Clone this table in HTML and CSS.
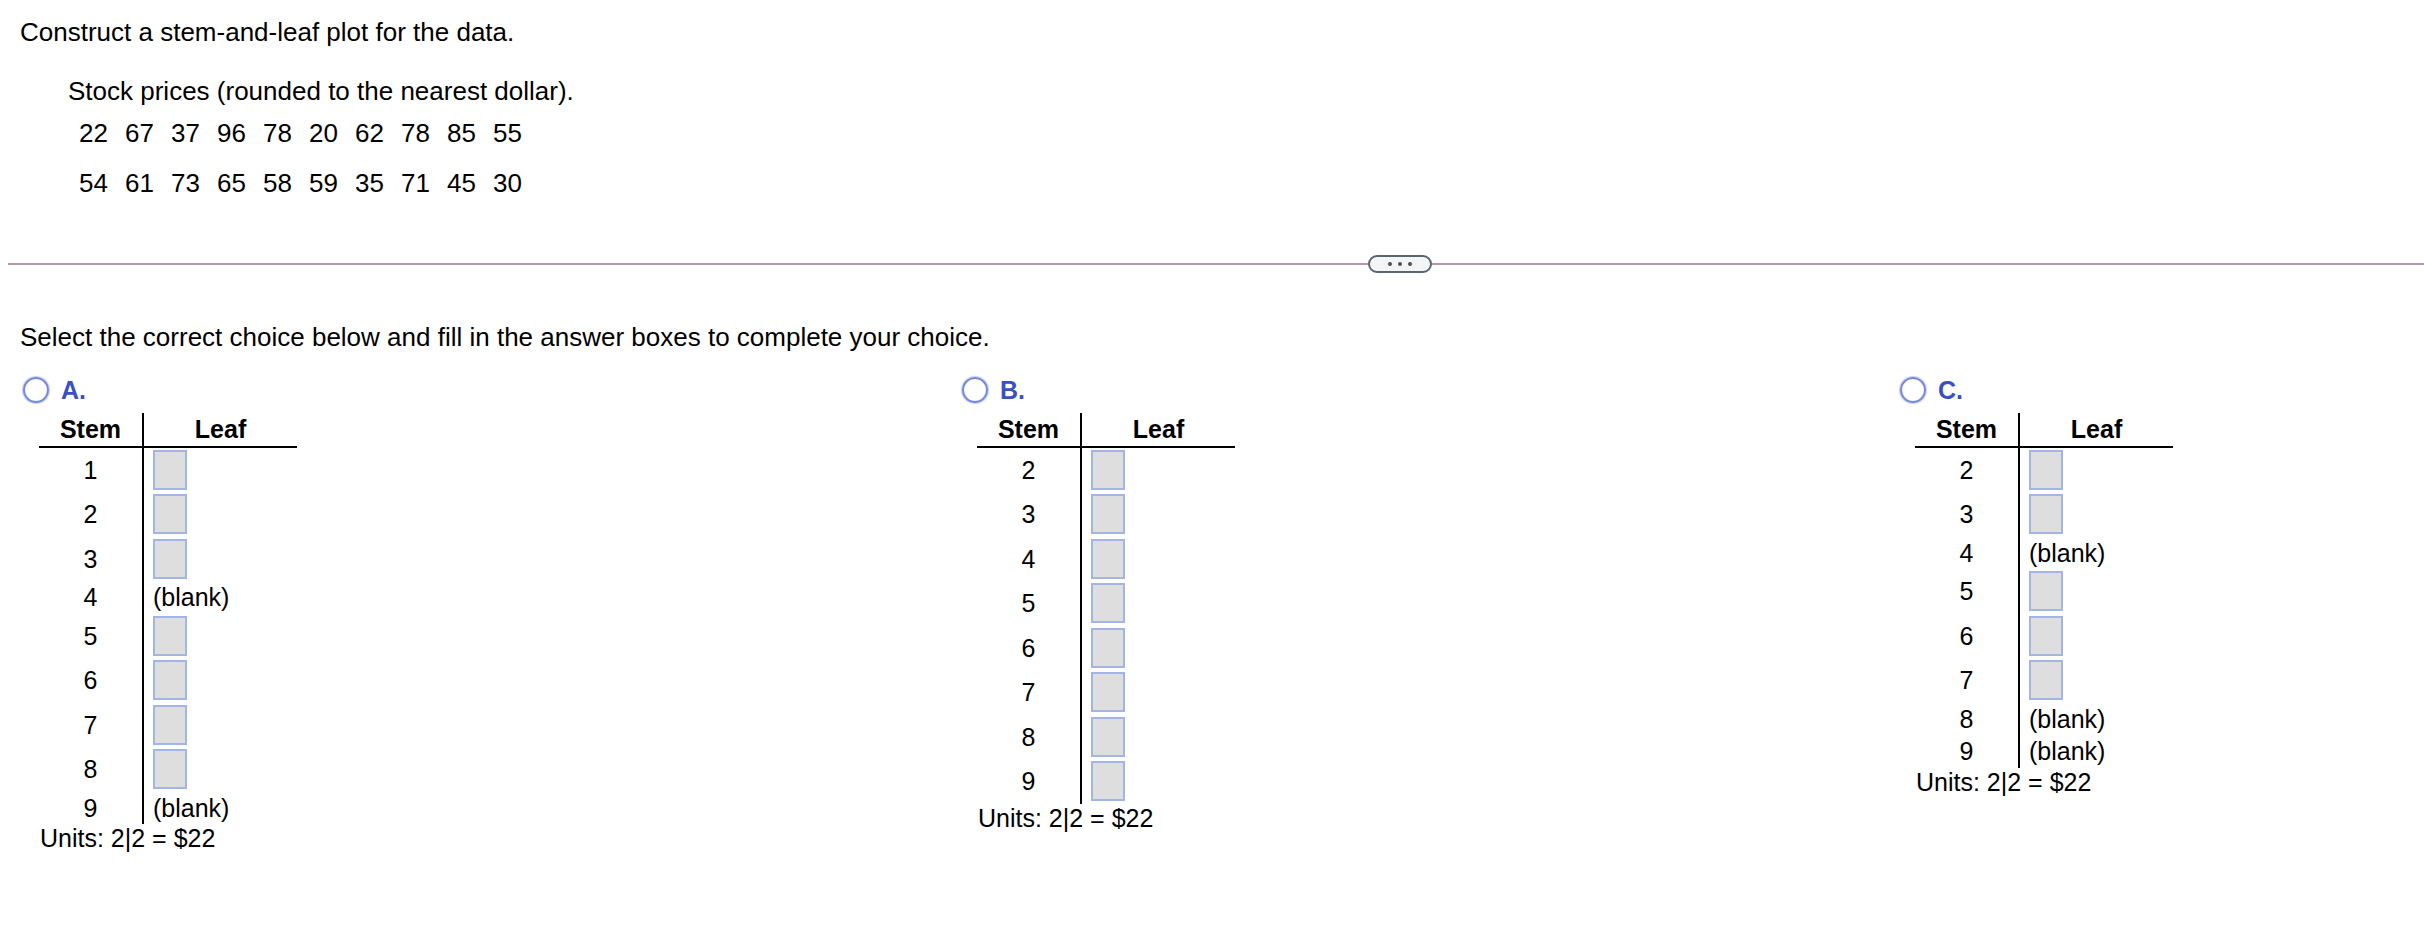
FILE: index.html
```html
<!DOCTYPE html>
<html lang="en">
<head>
<meta charset="utf-8">
<title>Stem-and-leaf plot</title>
<link rel="stylesheet" href="styles.css">
</head>
<body>
<section class="question">
  <p class="prompt">Construct a stem-and-leaf plot for the data.</p>
  <div class="data">
    <p class="data-title">Stock prices (rounded to the nearest dollar).</p>
    <div class="numbers">
      <span>22</span><span>67</span><span>37</span><span>96</span><span>78</span><span>20</span><span>62</span><span>78</span><span>85</span><span>55</span>
      <span>54</span><span>61</span><span>73</span><span>65</span><span>58</span><span>59</span><span>35</span><span>71</span><span>45</span><span>30</span>
    </div>
  </div>
</section>

<div class="divider">
  <span class="rule rule-left"></span>
  <button class="more" type="button" aria-label="More"><i></i><i></i><i></i></button>
  <span class="rule rule-right"></span>
</div>

<section class="answer">
  <p class="instruction">Select the correct choice below and fill in the answer boxes to complete your choice.</p>
  <div class="choices">
    <div class="choice">
      <div class="choice-label"><span class="radio"></span><span class="letter">A.</span></div>
      <table class="plot">
        <thead><tr><th class="stem">Stem</th><th class="leaf">Leaf</th></tr></thead>
        <tbody>
          <tr><td class="stem">1</td><td class="leaf"><span class="box"></span></td></tr>
          <tr><td class="stem">2</td><td class="leaf"><span class="box"></span></td></tr>
          <tr><td class="stem">3</td><td class="leaf"><span class="box"></span></td></tr>
          <tr><td class="stem">4</td><td class="leaf">(blank)</td></tr>
          <tr><td class="stem">5</td><td class="leaf"><span class="box"></span></td></tr>
          <tr><td class="stem">6</td><td class="leaf"><span class="box"></span></td></tr>
          <tr><td class="stem">7</td><td class="leaf"><span class="box"></span></td></tr>
          <tr><td class="stem">8</td><td class="leaf"><span class="box"></span></td></tr>
          <tr><td class="stem">9</td><td class="leaf">(blank)</td></tr>
        </tbody>
      </table>
      <p class="units">Units: 2|2 = $22</p>
    </div>

    <div class="choice">
      <div class="choice-label"><span class="radio"></span><span class="letter">B.</span></div>
      <table class="plot">
        <thead><tr><th class="stem">Stem</th><th class="leaf">Leaf</th></tr></thead>
        <tbody>
          <tr><td class="stem">2</td><td class="leaf"><span class="box"></span></td></tr>
          <tr><td class="stem">3</td><td class="leaf"><span class="box"></span></td></tr>
          <tr><td class="stem">4</td><td class="leaf"><span class="box"></span></td></tr>
          <tr><td class="stem">5</td><td class="leaf"><span class="box"></span></td></tr>
          <tr><td class="stem">6</td><td class="leaf"><span class="box"></span></td></tr>
          <tr><td class="stem">7</td><td class="leaf"><span class="box"></span></td></tr>
          <tr><td class="stem">8</td><td class="leaf"><span class="box"></span></td></tr>
          <tr><td class="stem">9</td><td class="leaf"><span class="box"></span></td></tr>
        </tbody>
      </table>
      <p class="units">Units: 2|2 = $22</p>
    </div>

    <div class="choice">
      <div class="choice-label"><span class="radio"></span><span class="letter">C.</span></div>
      <table class="plot">
        <thead><tr><th class="stem">Stem</th><th class="leaf">Leaf</th></tr></thead>
        <tbody>
          <tr><td class="stem">2</td><td class="leaf"><span class="box"></span></td></tr>
          <tr><td class="stem">3</td><td class="leaf"><span class="box"></span></td></tr>
          <tr><td class="stem">4</td><td class="leaf">(blank)</td></tr>
          <tr><td class="stem">5</td><td class="leaf"><span class="box"></span></td></tr>
          <tr><td class="stem">6</td><td class="leaf"><span class="box"></span></td></tr>
          <tr><td class="stem">7</td><td class="leaf"><span class="box"></span></td></tr>
          <tr><td class="stem">8</td><td class="leaf">(blank)</td></tr>
          <tr><td class="stem">9</td><td class="leaf">(blank)</td></tr>
        </tbody>
      </table>
      <p class="units">Units: 2|2 = $22</p>
    </div>
  </div>
</section>
</body>
</html>
```

FILE: styles.css
```css
* { box-sizing: border-box; }

html, body {
  margin: 0;
  padding: 0;
  background: #ffffff;
  color: #000000;
  font-family: "Liberation Sans", Arial, sans-serif;
}

p { margin: 0; }

/* ---------- question header ---------- */
.question {
  padding: 17px 0 0 20px;
  font-size: 26px;
  line-height: 30px;
}

.data {
  margin-top: 29px;
  padding-left: 48px;
}

.numbers {
  display: grid;
  grid-template-columns: repeat(10, 46px);
  row-gap: 20px;
  margin-top: 12px;
  padding-left: 11px;
}

/* ---------- divider ---------- */
.divider {
  display: flex;
  align-items: center;
  margin-top: 57px;
  padding-left: 8px;
  height: 18px;
}

.rule {
  height: 2px;
  background: #b994a6;
}

.rule-left { width: 1360px; }
.rule-right { flex: 1; }

.more {
  display: flex;
  align-items: center;
  justify-content: center;
  gap: 6px;
  width: 64px;
  height: 18px;
  padding: 0;
  border: 2px solid #5b6570;
  border-radius: 9px;
  background: #f3f4f6;
}

.more i {
  display: block;
  width: 4px;
  height: 4px;
  border-radius: 50%;
  background: #4a4f55;
}

/* ---------- answer section ---------- */
.answer {
  padding-left: 15px;
  font-size: 25px;
  line-height: 28px;
}

.instruction {
  margin: 50px 0 0 5px;
  font-size: 26px;
}

.choices {
  display: grid;
  grid-template-columns: 938px 938px 1fr;
  margin-top: 25px;
}

.choice-label {
  display: flex;
  align-items: center;
  height: 28px;
  padding-left: 8px;
}

.choices .choice + .choice .choice-label { padding-left: 9px; }

.radio {
  width: 26px;
  height: 26px;
  border: 2px solid #7588dc;
  border-radius: 50%;
  box-shadow: 0 0 1px 1px rgba(130, 148, 225, 0.45), inset 0 0 1px rgba(130, 148, 225, 0.45);
}

.letter {
  margin-left: 12px;
  font-weight: bold;
  color: #3a4fc2;
}

.plot {
  margin: 9px 0 0 24px;
  border-collapse: collapse;
  border-spacing: 0;
}

.plot th,
.plot td {
  padding: 2.25px 0;
  line-height: 28px;
  vertical-align: middle;
}

.plot th {
  font-weight: bold;
  border-bottom: 2px solid #000;
}

.plot .stem {
  width: 104px;
  text-align: center;
  border-right: 2px solid #000;
}

.plot th.leaf { width: 154px; text-align: center; }

.plot td.leaf {
  padding-left: 9px;
  text-align: left;
}

.box {
  display: block;
  width: 34px;
  height: 40px;
  border: 2px solid #a3b5e4;
  background: #dedede;
}

.units {
  margin-left: 25px;
}
```
